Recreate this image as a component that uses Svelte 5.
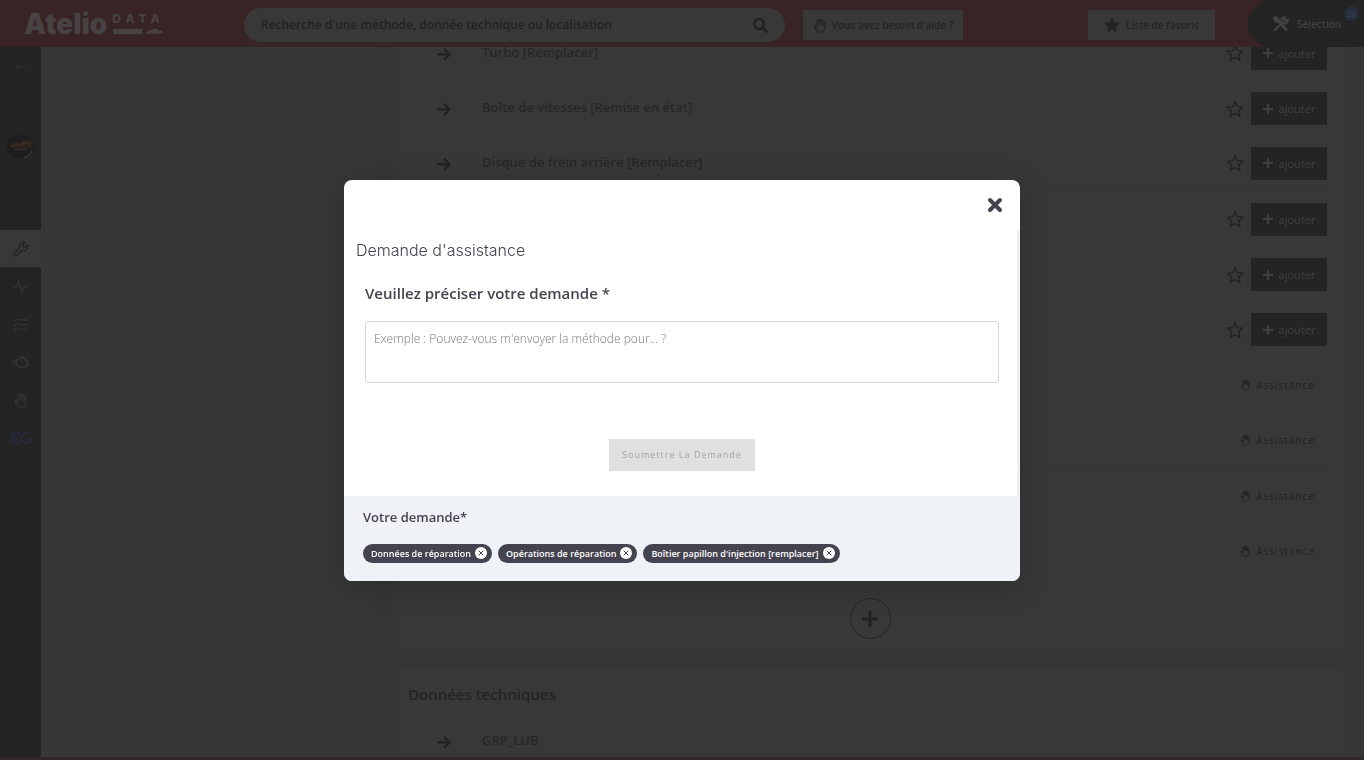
<script>
  const rows = [
    { name: 'Turbo [Remplacer]', add: true },
    { name: 'Boîte de vitesses [Remise en état]', add: true },
    { name: 'Disque de frein arrière [Remplacer]', add: true },
    { name: '', add: true },
    { name: '', add: true },
    { name: '', add: true },
    { name: '', add: false },
    { name: '', add: false },
    { name: '', add: false },
    { name: '', add: false }
  ];
  let chips = $state([
    'Données de réparation',
    'Opérations de réparation',
    "Boîtier papillon d'injection [remplacer]"
  ]);
  let message = $state('');
</script>

{#snippet arrow()}
  <svg class="arrow" viewBox="0 0 16 16" width="15" height="15" aria-hidden="true"><path d="M1 9H14M8.500 3l6 6-6 6" fill="none" stroke="currentColor" stroke-width="2.400" /></svg>
{/snippet}

{#snippet hand(size)}
  <svg viewBox="0 0 16 18" width={size} height={size + 2} aria-hidden="true" fill="none" stroke="currentColor" stroke-width="1.500" stroke-linecap="round" stroke-linejoin="round">
    <path d="M5 9V3.500a1.200 1.200 0 0 1 2.400 0V8V2.200a1.200 1.200 0 0 1 2.400 0V8V3.200a1.200 1.200 0 0 1 2.400 0V9V5.500a1.200 1.200 0 0 1 2.300 0V11c0 4-2 6-5.500 6S4.500 15.500 1.700 11C.8 9.300 2.600 8.300 3.600 9.600L5 11.200z" />
  </svg>
{/snippet}

{#snippet star(fill, size)}
  <svg viewBox="0 0 20 20" width={size} height={size} aria-hidden="true"><path d="M10 1.800l2.500 5.600 6.100.7-4.600 4.100 1.300 6-5.300-3.100-5.300 3.100 1.300-6L1.400 8.100l6.100-.7z" fill={fill ? 'currentColor' : 'none'} stroke="currentColor" stroke-width="1.500" /></svg>
{/snippet}

<div class="page">
  <header>
    <a class="logo" href="#accueil" aria-label="Atelio Data">
      <span class="brand">Atelio</span>
      <span class="sub">
        <span class="data">DATA</span>
        <svg viewBox="0 0 52 7" width="52" height="7" aria-hidden="true" fill="currentColor"><path d="M1 1h29v5H1zM34 6c0-3 2-3 4-3.500C41 .5 45 .3 47 2.200c2 .3 4 .8 4 3.300h-3l-1.500 1-1.500-1h-5l-1.500 1-1.500-1z" /></svg>
      </span>
    </a>
    <label class="search">
      <input type="text" placeholder="Recherche d'une méthode, donnée technique ou localisation" aria-label="Recherche" />
      <svg viewBox="0 0 512 512" width="15" height="15" aria-hidden="true"><path fill="currentColor" d="M505 442.700L405.300 343c-4.500-4.500-10.600-7-17-7H372c27.600-35.300 44-79.700 44-128C416 93.100 322.900 0 208 0S0 93.100 0 208s93.100 208 208 208c48.300 0 92.700-16.400 128-44v16.300c0 6.400 2.500 12.500 7 17l99.700 99.700c9.400 9.400 24.600 9.400 33.900 0l28.300-28.300c9.400-9.400 9.400-24.600.1-34zM208 336c-70.700 0-128-57.200-128-128 0-70.700 57.200-128 128-128 70.700 0 128 57.200 128 128 0 70.700-57.200 128-128 128z" /></svg>
    </label>
    <button class="top help">{@render hand(13)}Vous avez besoin d'aide ?</button>
    <button class="top fav">{@render star(true, 16)}Liste de favoris</button>
    <button class="selection">
      <svg viewBox="0 0 16 16" width="16" height="16" aria-hidden="true" fill="none" stroke="currentColor"><path stroke-width="2.600" d="M5 5l9 9.500" /><path stroke-width="2" d="M1 2.500l1.500-1.500 3 2v2.500H3z" fill="currentColor" /><path stroke-width="2.400" d="M10.500 5.500L2 14" stroke-linecap="round" /><path stroke-width="2" d="M14.800 3.800a3.300 3.300 0 1 1-2.800-2.600L11.500 3.200l1.300 1.300z" /></svg>
      <span>Sélection</span>
      <span class="count">26</span>
    </button>
  </header>

  <div class="body">
    <nav aria-label="Navigation">
      <a class="back" href="#retour" aria-label="Retour"><svg viewBox="0 0 12 8" width="11" height="8" fill="none" stroke="currentColor"><path d="M12 4H1M4 1L1 4l3 3" /></svg></a>
      <a class="vehicle" href="#vehicule" aria-label="Véhicule">
        <svg viewBox="0 0 30 26" width="30" height="26"><ellipse cx="15" cy="13" rx="14" ry="12" fill="#1e1e1e" /><path d="M3 11c4-3 8-3 11-2l4-3c3-1 7 0 9 2l-1 5-6 2-7-2-8 1z" fill="#30231f" /><path d="M5 12l7-1M13 12l5-3 6 1M9 15l12 1" stroke="#3d3532" fill="none" /><path d="M18 24c4-1 7-4 8-8" stroke="#333" stroke-width="2" fill="none" /></svg>
      </a>
      <a class="item active" href="#reparation" aria-label="Réparation"><svg viewBox="0 0 16 16" width="16" height="16" fill="none" stroke="currentColor" stroke-width="1.300"><path d="M14.600 4.200L12.300 6 10 5.700 9.800 3.500 11.800 1.400A4 4 0 0 0 6.800 6.700L1.500 12a1.600 1.600 0 0 0 2.400 2.400L9.300 9.200a4 4 0 0 0 5.300-5z" /></svg></a>
      <a class="item" href="#diagnostic" aria-label="Diagnostic"><svg viewBox="0 0 16 16" width="15" height="15" fill="none" stroke="currentColor" stroke-width="1.200"><path d="M0 8.500h3.500L6 2l3.500 12L12 8h4" /></svg></a>
      <a class="item" href="#liste" aria-label="Liste"><svg viewBox="0 0 16 16" width="15" height="15" fill="none" stroke="currentColor" stroke-width="1.200"><path d="M5.500 3H15M5.500 8H15M5.500 13H15M1 3l1 1 2-2.500M1 8l1 1 2-2.500M1 13l1 1 2-2.500" /></svg></a>
      <a class="item" href="#moteur" aria-label="Moteur"><svg viewBox="0 0 16 16" width="16" height="16" fill="none" stroke="currentColor" stroke-width="1.300"><path d="M3.500 5.500h2L7 4h4l1 2h1.200l.3 1.200H15v4h-1.500L12.500 13H6l-1.500-2h-1zM1 6v4.500M1 8.300h2.500M6 3.200h5" /></svg></a>
      <a class="item" href="#assistance" aria-label="Assistance">{@render hand(13)}</a>
      <a class="item" href="#carte" aria-label="Carte grise"><svg viewBox="0 0 22 14" width="22" height="14" fill="none" stroke="#272a3e" stroke-width="2"><path d="M9.500 2.500C5 0 1 3 1 7s4 7 8.500 4.500M1 7h6M20.500 3C17 0 11.500 2 11.500 7s5.500 7 9 3.500V7.500h-4" /></svg></a>
    </nav>

    <div class="pane"></div>

    <main>
      <section class="card first">
        <ul>
          {#each rows as row}
            <li>
              {@render arrow()}
              <span class="name">{row.name}</span>
              {#if row.add}
                <button class="star" aria-label="Favori">{@render star(false, 18)}</button>
                <button class="add"><svg viewBox="0 0 10 10" width="10" height="10" aria-hidden="true"><path d="M5 0v10M0 5h10" stroke="currentColor" stroke-width="2" /></svg>ajouter</button>
              {:else}
                <button class="assist">{@render hand(10)}Assistance</button>
              {/if}
            </li>
          {/each}
        </ul>
        <button class="more" aria-label="Afficher plus"><svg viewBox="0 0 16 16" width="16" height="16"><path d="M8 0v16M0 8h16" stroke="currentColor" stroke-width="3" /></svg></button>
      </section>
      <section class="card">
        <h2>Données techniques</h2>
        <ul>
          <li>{@render arrow()}<span class="name">GRP_LUB</span></li>
        </ul>
      </section>
    </main>
  </div>
</div>

<div class="layer">
  <div class="dialog" role="dialog" aria-modal="true" aria-labelledby="dialog-title">
    <div class="bar">
      <button class="close" aria-label="Fermer"><svg viewBox="0 0 16 16" width="16" height="16"><path d="M3 3l10 10M13 3L3 13" stroke="currentColor" stroke-width="4" stroke-linecap="round" /></svg></button>
    </div>
    <div class="content">
      <h1 id="dialog-title">Demande d'assistance</h1>
      <form onsubmit={(e) => e.preventDefault()}>
        <label for="message">Veuillez préciser votre demande *</label>
        <textarea id="message" bind:value={message} placeholder="Exemple : Pouvez-vous m'envoyer la méthode pour... ?"></textarea>
        <button class="submit" disabled={!message}>Soumettre La Demande</button>
      </form>
    </div>
    <footer>
      <h3>Votre demande*</h3>
      <div class="chips">
        {#each chips as chip}
          <span class="chip">{chip}<button aria-label="Retirer" onclick={() => (chips = chips.filter((c) => c !== chip))}><svg viewBox="0 0 12 12" width="12" height="12"><circle cx="6" cy="6" r="6" fill="#fff" /><path d="M3.700 3.700l4.600 4.600M8.300 3.700L3.700 8.300" stroke="#45434f" stroke-width="1" /></svg></button></span>
        {/each}
      </div>
    </footer>
  </div>
</div>

<style>
  :global(body) {
    margin: 0;
    background: #363636;
    font-family: 'Open Sans', sans-serif;
  }
  * {
    box-sizing: border-box;
  }
  button {
    border: 0;
    padding: 0;
    margin: 0;
    background: none;
    font: inherit;
    color: inherit;
  }
  svg {
    display: block;
    flex: none;
  }
  h1, h2, h3, ul {
    margin: 0;
    padding: 0;
  }
  .page {
    height: 100vh;
    overflow: hidden;
    display: flex;
    flex-direction: column;
    color: #222;
    border-bottom: 3px solid #2e2829;
  }
  header {
    flex: none;
    position: relative;
    z-index: 1;
    height: 47px;
    display: flex;
    align-items: center;
    padding-left: 24px;
    background: #382425;
  }
  .logo {
    display: flex;
    align-items: center;
    gap: 5px;
    width: 220px;
    flex: none;
    color: #484243;
    text-decoration: none;
  }
  .brand {
    font: 900 28px/30px Inter, sans-serif;
  }
  .sub {
    display: flex;
    flex-direction: column;
    gap: 4px;
  }
  .data {
    font: 800 12px/11px Inter, sans-serif;
    letter-spacing: 5px;
  }
  .search {
    width: 541px;
    height: 34px;
    border-radius: 17px;
    background: #383838;
    display: flex;
    align-items: center;
    padding: 0 17px;
    margin-top: 3px;
    color: #222;
  }
  .search input {
    flex: 1;
    border: 0;
    padding: 0;
    outline: 0;
    background: none;
    font: 600 12px/18px 'Open Sans', sans-serif;
    color: #222;
  }
  .search input::placeholder {
    color: #222;
    opacity: 1;
  }
  .top {
    display: flex;
    align-items: center;
    justify-content: center;
    height: 30px;
    margin-top: 3px;
    background: #383838;
    font-size: 10px;
    font-weight: 600;
    color: #242424;
    white-space: nowrap;
  }
  .help {
    width: 160px;
    gap: 6px;
    margin-left: 18px;
  }
  .fav {
    width: 127px;
    gap: 6px;
    margin-left: auto;
  }
  .selection {
    position: relative;
    display: flex;
    align-items: center;
    gap: 8px;
    width: 116px;
    height: 47px;
    margin-left: 33px;
    padding-left: 25px;
    border-radius: 23px 0 0 23px;
    background: #242424;
    color: #414141;
    font-size: 10px;
    font-weight: 600;
  }
  .count {
    position: absolute;
    top: 6px;
    right: 5px;
    width: 15px;
    height: 15px;
    border-radius: 50%;
    background: #252d38;
    color: #334052;
    font-size: 8px;
    line-height: 15px;
    text-align: center;
  }
  .body {
    flex: 1;
    min-height: 0;
    display: flex;
  }
  nav {
    flex: none;
    width: 41px;
    background: #242424;
    color: #363636;
  }
  nav a {
    display: flex;
    align-items: center;
    justify-content: center;
    color: inherit;
  }
  .back {
    height: 40px;
  }
  .vehicle {
    height: 120px;
    margin-bottom: 23px;
  }
  .item {
    height: 38px;
  }
  nav .active {
    height: 37px;
    background: #383838;
    color: #222;
  }
  .pane {
    flex: none;
    width: 336px;
    background: #373737;
  }
  main {
    flex: 1;
    min-width: 0;
    margin-top: -22px;
    padding: 0 18px 0 17px;
    background: #363636;
  }
  .card {
    background: #383838;
    border-radius: 6px;
    padding: 14px 14px 0;
    margin-bottom: 18px;
  }
  .first {
    padding-top: 0;
    padding-bottom: 10px;
  }
  h2 {
    font-size: 15px;
    font-weight: 600;
    line-height: 26px;
    color: #242424;
  }
  ul {
    list-style: none;
  }
  li {
    display: flex;
    align-items: center;
    height: 55px;
    padding: 0 5px 0 28px;
  }
  .first li:nth-child(3n + 1) {
    height: 56px;
  }
  .first li:nth-child(5n + 3) {
    border-bottom: 1px solid #363636;
  }
  h2 + ul {
    margin-top: 7px;
  }
  .name {
    flex: 1;
    padding: 0 0 3px 31px;
    font-size: 13px;
    font-weight: 600;
    line-height: 18px;
    color: #272727;
  }
  .star {
    margin-right: 7px;
  }
  .add {
    display: flex;
    align-items: center;
    justify-content: center;
    gap: 6px;
    width: 76px;
    height: 33px;
    background: #242424;
    color: #404040;
    font-size: 11px;
  }
  .assist {
    display: flex;
    align-items: center;
    gap: 6px;
    margin-right: 12px;
    font-size: 10px;
    letter-spacing: 1px;
  }
  .more {
    display: flex;
    align-items: center;
    justify-content: center;
    width: 41px;
    height: 41px;
    margin: 19px auto 0;
    border: 1px solid #242424;
    border-radius: 50%;
  }
  .layer {
    position: fixed;
    inset: 0;
    z-index: 2;
    display: flex;
    align-items: center;
    justify-content: center;
  }
  .dialog {
    width: 676px;
    max-width: 96%;
    border-radius: 8px;
    overflow: hidden;
    background: #fff;
    color: #45434f;
    box-shadow: 0 6px 30px rgba(0, 0, 0, 0.2);
  }
  .bar {
    display: flex;
    justify-content: flex-end;
    height: 50px;
    padding: 17px 17px 0 0;
  }
  .close {
    height: 16px;
  }
  .content {
    border-right: 3px solid #eff1f3;
    padding: 8px 18px 25px 12px;
  }
  h1 {
    font: 300 16px/24px Inter, sans-serif;
  }
  form {
    padding-left: 9px;
    display: flex;
    flex-direction: column;
  }
  label[for] {
    margin: 19px 0 16px;
    font-size: 15px;
    font-weight: 600;
    line-height: 24px;
  }
  textarea {
    width: 100%;
    height: 62px;
    padding: 8px;
    border: 1px solid #d6d9db;
    border-radius: 3px;
    outline: 0;
    resize: none;
    font: 300 12px/18px 'Open Sans', sans-serif;
    color: #45434f;
  }
  textarea::placeholder {
    color: #777;
    opacity: 1;
  }
  .submit {
    align-self: center;
    height: 32px;
    margin-top: 56px;
    padding: 0 13px;
    background: #e0e0e0;
    color: #a2a2a2;
    font-size: 9px;
    letter-spacing: 1px;
  }
  footer {
    padding: 12px 19px 18px;
    background: #eff3f7;
  }
  h3 {
    font-size: 13px;
    font-weight: 600;
    line-height: 18px;
  }
  .chips {
    display: flex;
    flex-wrap: wrap;
    gap: 6px;
    margin-top: 18px;
  }
  .chip {
    display: flex;
    align-items: center;
    gap: 4px;
    height: 19px;
    padding: 0 5px 0 8px;
    border-radius: 10px;
    background: #45434f;
    color: #fff;
    font-size: 9px;
    font-weight: 600;
    white-space: nowrap;
  }
</style>
